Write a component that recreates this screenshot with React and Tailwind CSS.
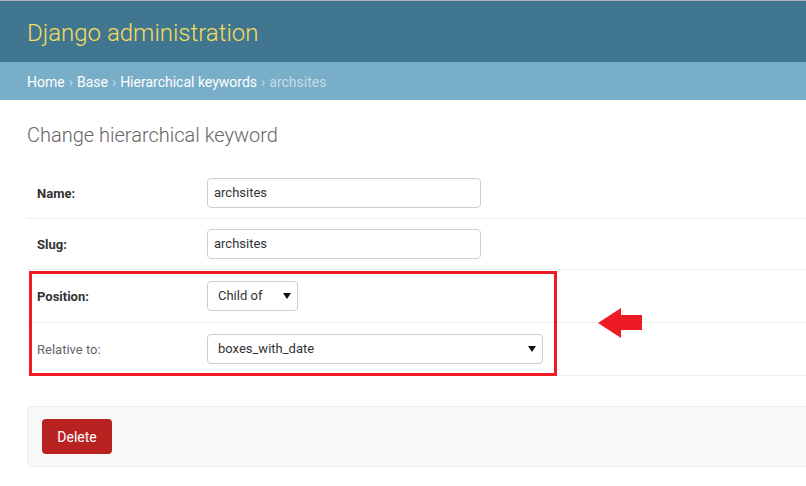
export default function App() {
  const rows = [
    { label: "Name:", required: true, kind: "input", value: "archsites", h: "h-[51px]" },
    { label: "Slug:", required: true, kind: "input", value: "archsites", h: "h-[51px]" },
    { label: "Position:", required: true, kind: "select", value: "Child of", w: "w-[91px]", h: "h-[53px]" },
    { label: "Relative to:", required: false, kind: "select", value: "boxes_with_date", w: "w-[336px]", h: "h-[53px]" },
  ];

  return (
    <div
      className="relative w-[806px] h-[486px] overflow-hidden bg-white"
      style={{ fontFamily: "Roboto, 'Liberation Sans', sans-serif" }}
    >
      <div className="h-px bg-[#b4b4b4]" />
      <div className="h-[61px] bg-[#417690] flex items-center pl-[27px] pt-[3px]">
        <span className="text-[24px] font-light text-[#f5dd5d] leading-none">
          Django administration
        </span>
      </div>
      <div className="h-[38px] bg-[#79aec8] flex items-center pl-[27px] pt-[2px] text-[14px] text-white">
        <span>Home</span>
        <span className="text-[#c4dce8] mx-[4px]">›</span>
        <span>Base</span>
        <span className="text-[#c4dce8] mx-[4px]">›</span>
        <span>Hierarchical keywords</span>
        <span className="text-[#c4dce8] mx-[4px]">›</span>
        <span className="text-[#c4dce8]">archsites</span>
      </div>

      <div className="pl-[27px]">
        <h1 className="text-[20px] font-light text-[#666] mt-[23px] h-[45px] leading-[24px]">
          Change hierarchical keyword
        </h1>

        <div>
          {rows.map((r) => (
            <div
              key={r.label}
              className={`flex items-center border-b border-[#eee] ${r.h}`}
            >
              <label
                className={`w-[180px] pl-[10px] pt-[1px] text-[13px] ${
                  r.required ? "font-bold text-[#333]" : "text-[#666]"
                }`}
              >
                {r.label}
              </label>
              {r.kind === "input" ? (
                <div className="w-[274px] h-[30px] border border-[#ccc] rounded-[4px] flex items-center px-[6px] text-[13px] text-[#333]">
                  {r.value}
                </div>
              ) : (
                <div
                  className={`${r.w} h-[30px] border border-[#ccc] rounded-[4px] flex items-center justify-between pl-[10px] pr-[6px] text-[13px] text-[#333]`}
                >
                  <span>{r.value}</span>
                  <svg width="8" height="6" viewBox="0 0 8 6">
                    <path d="M0 0 H8 L4 6 Z" fill="#111" />
                  </svg>
                </div>
              )}
            </div>
          ))}
        </div>

        <div className="mt-[30px] -mr-[10px] h-[61px] bg-[#f8f8f8] border border-[#eee] rounded-[4px] flex items-center px-[14px]">
          <button className="w-[70px] h-[35px] bg-[#ba2121] rounded-[4px] text-white text-[14px] pt-[1px]">
            Delete
          </button>
        </div>
      </div>

      <div className="absolute left-[29px] top-[271px] w-[528px] h-[105px] border-[3px] border-[#ed1c24]" />
      <svg
        className="absolute left-[598px] top-[308px]"
        width="44"
        height="30"
        viewBox="0 0 44 30"
      >
        <path d="M0 15 L23 0 V7 H44 V22 H23 V30 Z" fill="#ed1c24" />
      </svg>
    </div>
  );
}
